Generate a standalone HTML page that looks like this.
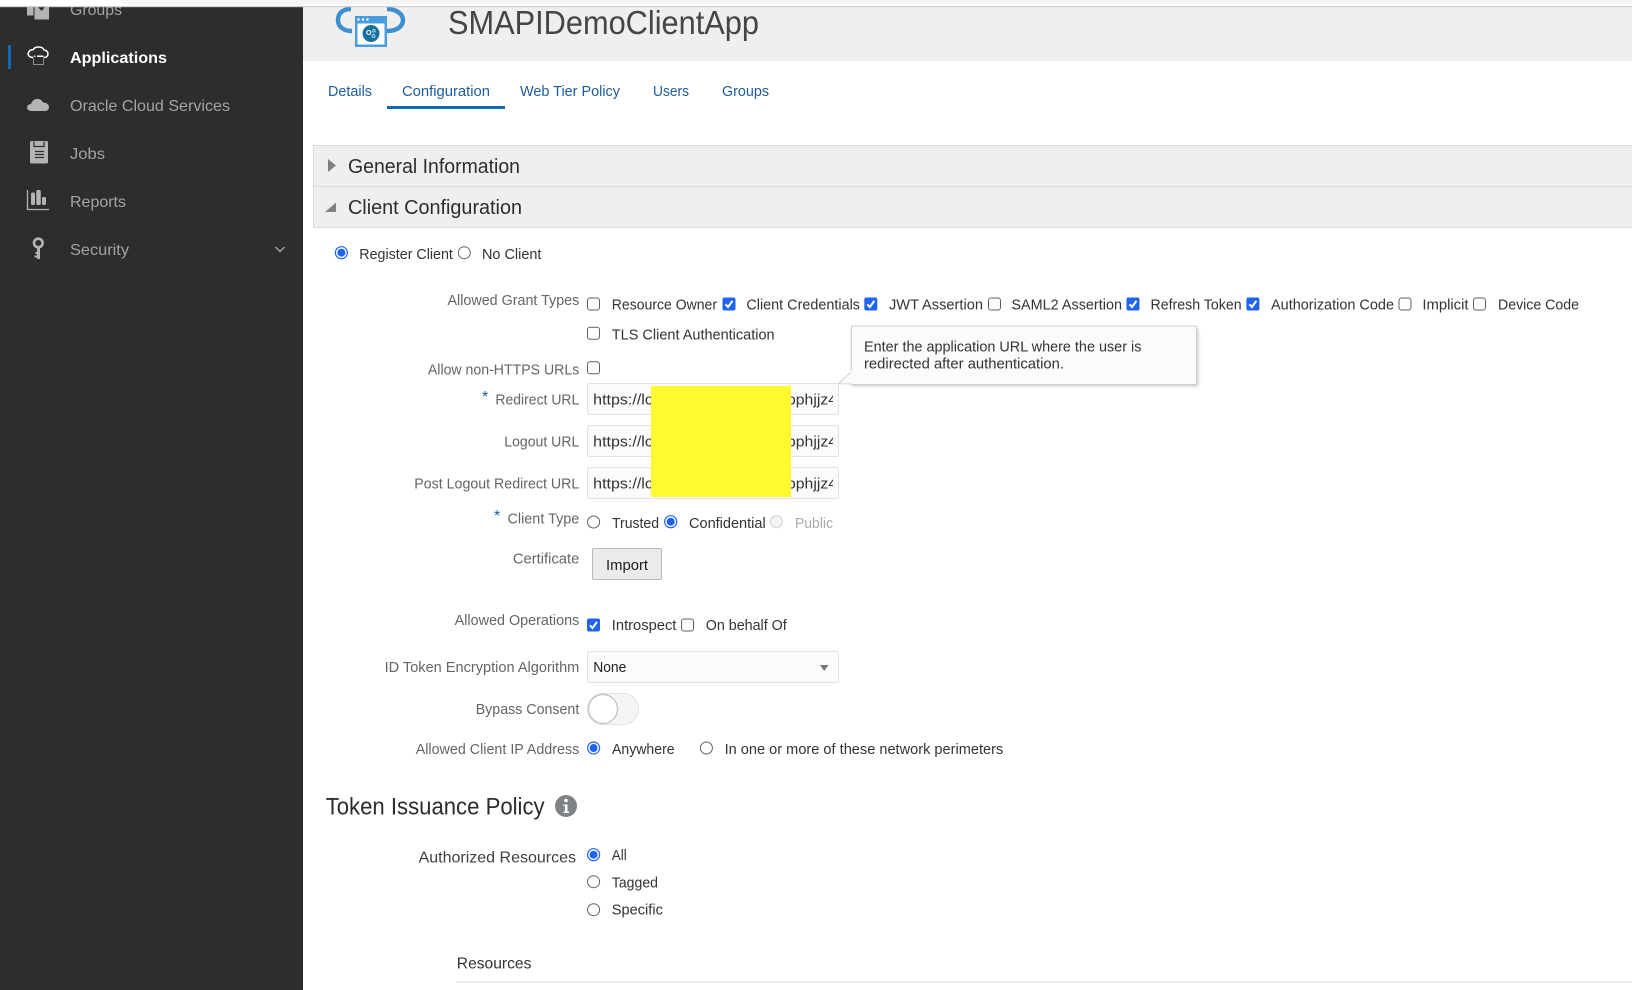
<!DOCTYPE html>
<html lang="en">
<head>
<meta charset="utf-8">
<title>SMAPIDemoClientApp</title>
<style>
html,body{margin:0;padding:0;background:#fff;width:1632px;height:990px;overflow:hidden}
svg{display:block}
text{font-family:"Liberation Sans",Arial,sans-serif;font-size:14.5px;fill:#3c3c3c}
.nav{font-size:16px;fill:#a2a3a5}
.lbl{fill:#656565}
.tab{fill:#1d5c9c}
.sec{font-size:20px;fill:#2d2d2d}
.val{fill:#333}
</style>
</head>
<body>
<svg xmlns="http://www.w3.org/2000/svg" width="1632" height="990" viewBox="0 0 1632 990">
<defs>
  <g id="cb"><rect x="0.5" y="0.5" width="12" height="12" rx="2.5" fill="#fff" stroke="#5f5f5f"/></g>
  <g id="cc"><rect x="0" y="0" width="13" height="13" rx="2" fill="#1f63ee"/><path d="M3 6.8L5.5 9.5L10 3.4" fill="none" stroke="#fff" stroke-width="2"/></g>
  <g id="ru"><circle r="6" fill="#fff" stroke="#5f5f5f"/></g>
  <g id="rs"><circle r="6" fill="#fff" stroke="#1f63ee" stroke-width="1.2"/><circle r="4" fill="#1f63ee"/></g>
  <clipPath id="c1"><rect x="590" y="384" width="243" height="116"/></clipPath>
</defs>

<rect width="1632" height="990" fill="#fff"/>

<!-- sidebar -->
<rect x="0" y="0" width="303" height="990" fill="#2c2d2f"/>
<rect x="8" y="45" width="3" height="24" fill="#0f6ab4"/>
<text class="nav" x="70" y="15" textLength="52" lengthAdjust="spacingAndGlyphs">Groups</text>
<text class="nav" x="70" y="63" textLength="97" lengthAdjust="spacingAndGlyphs" style="font-weight:bold;fill:#fff">Applications</text>
<text class="nav" x="70" y="111" textLength="160" lengthAdjust="spacingAndGlyphs">Oracle Cloud Services</text>
<text class="nav" x="70" y="159" textLength="35" lengthAdjust="spacingAndGlyphs">Jobs</text>
<text class="nav" x="70" y="207" textLength="56" lengthAdjust="spacingAndGlyphs">Reports</text>
<text class="nav" x="70" y="255" textLength="59" lengthAdjust="spacingAndGlyphs">Security</text>
<path d="M275.5 247L280 251.5L284.5 247" fill="none" stroke="#a8a9ab" stroke-width="1.3"/>

<!-- sidebar icons -->
<path d="M27 7H33.5V15.5H27ZM34.5 7H38L41.500 11L45 7H49V19.500H34.5Z" fill="#b3b4b6"/>
<path d="M33.5 57.500C29 57.500 27 54.500 28.800 52C29.500 50.500 31 49.800 33 49.800C35 46 42.500 46 44 50C48 50.300 49.500 55 46 57.200L43.500 57.500" fill="none" stroke="#fff" stroke-width="1.5"/>
<rect x="33.500" y="55.500" width="10" height="9" fill="none" stroke="#8e8f91" stroke-width="1"/>
<rect x="33" y="55" width="11" height="2.500" fill="#2c2d2f"/>
<rect x="37" y="55.500" width="6.500" height="1.500" fill="#fff"/>
<rect x="33.500" y="55.500" width="2.500" height="1.500" fill="#aaa"/>
<path d="M31.500 111C26 111 25.500 104.500 31 104C32.500 98.500 40 96.500 43 102.500C46.500 102.500 49 104.500 49 107C49 109.800 47 111 45 111Z" fill="#b3b4b6"/>
<rect x="30" y="141" width="18" height="22.500" rx="1.500" fill="#b3b4b6"/>
<path d="M34 141.500V146.500H44V141.500" fill="none" stroke="#2c2d2f" stroke-width="1.200"/>
<path d="M35 151.500H44M35 154.500H44M35 157.500H44" stroke="#2c2d2f" stroke-width="1.300"/>
<path d="M27.500 190V209.500H49" fill="none" stroke="#b3b4b6" stroke-width="1.300"/>
<rect x="31" y="192.500" width="4" height="12.500" rx="1.500" fill="#b3b4b6"/>
<rect x="36.300" y="190" width="4.500" height="15" rx="1.500" fill="#b3b4b6"/>
<rect x="42" y="197" width="4" height="8" rx="1.500" fill="#b3b4b6"/>
<circle cx="38.300" cy="243" r="4.300" fill="none" stroke="#b3b4b6" stroke-width="2.600"/>
<path d="M37 247H40V259H37V257.500H34.500V255.500H37V254H35.500V252H37Z" fill="#b3b4b6"/>

<!-- header -->
<rect x="303" y="7" width="1329" height="54" fill="#efefef"/>
<path d="M351 9C342 9 338 14 338 20C338 27 344 31 352 31" fill="none" stroke="#3e8fd2" stroke-width="4.500"/>
<path d="M387 9C396 9 403 14 403 20C403 27 396 31 387 31" fill="none" stroke="#3e8fd2" stroke-width="4.500"/>
<rect x="355" y="16" width="32" height="31" fill="#4a9cdc"/>
<rect x="357.500" y="23.500" width="27" height="21" fill="#fff"/>
<circle cx="358.500" cy="19.500" r="1.200" fill="#fff"/><circle cx="363" cy="19.500" r="1.200" fill="#fff"/><circle cx="367.500" cy="19.500" r="1.200" fill="#fff"/>
<circle cx="371" cy="33.500" r="8.500" fill="#15719f"/>
<circle cx="368.800" cy="32.500" r="2" fill="none" stroke="#fff" stroke-width="1.100"/>
<circle cx="374" cy="30.800" r="1.300" fill="none" stroke="#d5e6f0" stroke-width=".8"/>
<circle cx="373.500" cy="36" r="1.500" fill="none" stroke="#d5e6f0" stroke-width=".8"/>
<text x="448" y="34" textLength="311" lengthAdjust="spacingAndGlyphs" style="font-size:33px;fill:#454545">SMAPIDemoClientApp</text>

<!-- top strip -->
<rect x="0" y="0" width="1632" height="6" fill="#fff"/>
<path d="M118 0H1632V5H128Z" fill="#f5f5f5"/>
<rect x="0" y="6" width="1632" height="1.200" fill="#d0d0d0"/>

<!-- tabs -->
<text class="tab" x="328" y="96" textLength="44" lengthAdjust="spacingAndGlyphs">Details</text>
<text class="tab" x="402" y="96" textLength="88" lengthAdjust="spacingAndGlyphs">Configuration</text>
<text class="tab" x="520" y="96" textLength="100" lengthAdjust="spacingAndGlyphs">Web Tier Policy</text>
<text class="tab" x="653" y="96" textLength="36" lengthAdjust="spacingAndGlyphs">Users</text>
<text class="tab" x="722" y="96" textLength="47" lengthAdjust="spacingAndGlyphs">Groups</text>
<rect x="387" y="106" width="118" height="3" fill="#0f6ab4"/>

<!-- sections -->
<rect x="313.500" y="145.500" width="1320" height="41" fill="#efefef" stroke="#dcdcdc"/>
<rect x="313.500" y="186.500" width="1320" height="41" fill="#efefef" stroke="#dcdcdc"/>
<path d="M328 159L336 165.500L328 172Z" fill="#808080"/>
<path d="M336 202.500V212H325Z" fill="#808080"/>
<text class="sec" x="348" y="173" textLength="172" lengthAdjust="spacingAndGlyphs">General Information</text>
<text class="sec" x="348" y="214" textLength="174" lengthAdjust="spacingAndGlyphs">Client Configuration</text>

<!-- client radio -->
<use href="#rs" x="341.400" y="252.700"/>
<text class="val" x="359.300" y="259" textLength="93.600" lengthAdjust="spacingAndGlyphs">Register Client</text>
<use href="#ru" x="464.300" y="252.700"/>
<text class="val" x="482" y="259" textLength="59.400" lengthAdjust="spacingAndGlyphs">No Client</text>

<!-- grant types -->
<text class="lbl" x="447.500" y="305" textLength="131.800" lengthAdjust="spacingAndGlyphs">Allowed Grant Types</text>
<use href="#cb" x="587" y="297.500"/>
<text class="val" x="611.800" y="309.300" textLength="105.200" lengthAdjust="spacingAndGlyphs">Resource Owner</text>
<use href="#cc" x="722.500" y="297.500"/>
<text class="val" x="746.400" y="309.300" textLength="113.600" lengthAdjust="spacingAndGlyphs">Client Credentials</text>
<use href="#cc" x="864.300" y="297.500"/>
<text class="val" x="889" y="309.300" textLength="94" lengthAdjust="spacingAndGlyphs">JWT Assertion</text>
<use href="#cb" x="988" y="297.500"/>
<text class="val" x="1011.400" y="309.300" textLength="110.600" lengthAdjust="spacingAndGlyphs">SAML2 Assertion</text>
<use href="#cc" x="1126.500" y="297.500"/>
<text class="val" x="1150.500" y="309.300" textLength="91.100" lengthAdjust="spacingAndGlyphs">Refresh Token</text>
<use href="#cc" x="1246.400" y="297.500"/>
<text class="val" x="1271" y="309.300" textLength="123" lengthAdjust="spacingAndGlyphs">Authorization Code</text>
<use href="#cb" x="1398.500" y="297.500"/>
<text class="val" x="1422.400" y="309.300" textLength="46.100" lengthAdjust="spacingAndGlyphs">Implicit</text>
<use href="#cb" x="1473" y="297.500"/>
<text class="val" x="1498" y="309.300" textLength="81" lengthAdjust="spacingAndGlyphs">Device Code</text>
<use href="#cb" x="587" y="326.700"/>
<text class="val" x="611.800" y="339.300" textLength="162.800" lengthAdjust="spacingAndGlyphs">TLS Client Authentication</text>

<text class="lbl" x="427.900" y="374.300" textLength="151.400" lengthAdjust="spacingAndGlyphs">Allow non-HTTPS URLs</text>
<use href="#cb" x="587" y="361.300"/>

<!-- urls -->
<text x="482" y="402" style="font-size:16px;fill:#1d5c9c">*</text>
<text class="lbl" x="495.400" y="404.300" textLength="83.900" lengthAdjust="spacingAndGlyphs">Redirect URL</text>
<text class="lbl" x="504.300" y="446.300" textLength="75" lengthAdjust="spacingAndGlyphs">Logout URL</text>
<text class="lbl" x="414.300" y="488.300" textLength="165" lengthAdjust="spacingAndGlyphs">Post Logout Redirect URL</text>
<rect x="587.500" y="383.500" width="251" height="31" rx="2" fill="#fbfbfe" stroke="#e0e1e4"/>
<rect x="587.500" y="425.500" width="251" height="31" rx="2" fill="#fbfbfe" stroke="#e0e1e4"/>
<rect x="587.500" y="467.500" width="251" height="31" rx="2" fill="#fbfbfe" stroke="#e0e1e4"/>
<g clip-path="url(#c1)">
<text class="val" x="593.200" y="404.300" textLength="73" lengthAdjust="spacingAndGlyphs">https://lcm</text>
<text class="val" x="593.200" y="446.300" textLength="73" lengthAdjust="spacingAndGlyphs">https://lcm</text>
<text class="val" x="593.200" y="488.300" textLength="73" lengthAdjust="spacingAndGlyphs">https://lcm</text>
<text class="val" x="787" y="404.300" textLength="50" lengthAdjust="spacingAndGlyphs">pphjjz4</text>
<text class="val" x="787" y="446.300" textLength="50" lengthAdjust="spacingAndGlyphs">pphjjz4</text>
<text class="val" x="787" y="488.300" textLength="50" lengthAdjust="spacingAndGlyphs">pphjjz4</text>
</g>
<rect x="651" y="386" width="140" height="111" fill="#fdfa2f"/>

<!-- tooltip -->
<rect x="852" y="328" width="346" height="58" fill="#999" opacity=".6" style="filter:blur(1.5px)"/>
<path d="M851.500 326H1196.500V384.500H851.500Z" fill="#fbfbfe" stroke="#cfcfcf"/>
<path d="M851.500 371.500L838.600 383.700L851.500 384" fill="#fbfbfe" stroke="#cfcfcf"/>
<rect x="850.500" y="371" width="2" height="13" fill="#fbfbfe"/>
<text class="val" x="864" y="351.700" textLength="277.400" lengthAdjust="spacingAndGlyphs">Enter the application URL where the user is</text>
<text class="val" x="864" y="368.700" textLength="200" lengthAdjust="spacingAndGlyphs">redirected after authentication.</text>

<!-- client type -->
<text x="494" y="521" style="font-size:16px;fill:#1d5c9c">*</text>
<text class="lbl" x="507.500" y="523.300" textLength="71.800" lengthAdjust="spacingAndGlyphs">Client Type</text>
<use href="#ru" x="593.600" y="522"/>
<text class="val" x="612" y="528" textLength="47" lengthAdjust="spacingAndGlyphs">Trusted</text>
<use href="#rs" x="670.700" y="521.700"/>
<text class="val" x="689" y="528" textLength="76.700" lengthAdjust="spacingAndGlyphs">Confidential</text>
<circle cx="776.400" cy="521.700" r="6" fill="#f3f3f3" stroke="#cfcfcf"/>
<text x="795" y="528" textLength="38" lengthAdjust="spacingAndGlyphs" style="fill:#ababab">Public</text>

<!-- cert -->
<text class="lbl" x="512.900" y="563.700" textLength="66.400" lengthAdjust="spacingAndGlyphs">Certificate</text>
<rect x="592.500" y="548.500" width="69" height="31" rx="1.500" fill="#ebebeb" stroke="#b9b9b9"/>
<text x="606" y="570" textLength="42" lengthAdjust="spacingAndGlyphs" style="fill:#1e1e1e">Import</text>

<!-- operations -->
<text class="lbl" x="454.600" y="625" textLength="124.700" lengthAdjust="spacingAndGlyphs">Allowed Operations</text>
<use href="#cc" x="587" y="618.500"/>
<text class="val" x="611.800" y="630" textLength="64.600" lengthAdjust="spacingAndGlyphs">Introspect</text>
<use href="#cb" x="681" y="618.500"/>
<text class="val" x="705.700" y="630" textLength="81.100" lengthAdjust="spacingAndGlyphs">On behalf Of</text>

<!-- select -->
<text class="lbl" x="384.600" y="672" textLength="194.700" lengthAdjust="spacingAndGlyphs">ID Token Encryption Algorithm</text>
<rect x="587.500" y="651.500" width="251" height="31" rx="2" fill="#fbfbfe" stroke="#e0e1e4"/>
<text class="val" x="593.200" y="672" textLength="33.200" lengthAdjust="spacingAndGlyphs" style="fill:#222">None</text>
<path d="M820 665H828.500L824.200 671Z" fill="#777"/>

<!-- toggle -->
<text class="lbl" x="475.700" y="714" textLength="103.600" lengthAdjust="spacingAndGlyphs">Bypass Consent</text>
<rect x="587.500" y="693.500" width="51" height="31" rx="15.500" fill="#f5f5f5" stroke="#e2e2e2"/>
<circle cx="603" cy="709" r="14.500" fill="#fff" stroke="#bdbdbd" stroke-width="1.200"/>

<!-- ip -->
<text class="lbl" x="415.700" y="754" textLength="163.600" lengthAdjust="spacingAndGlyphs">Allowed Client IP Address</text>
<use href="#rs" x="593.600" y="748"/>
<text class="val" x="612" y="754" textLength="62.600" lengthAdjust="spacingAndGlyphs">Anywhere</text>
<use href="#ru" x="706.400" y="748"/>
<text class="val" x="724.600" y="754" textLength="278.700" lengthAdjust="spacingAndGlyphs">In one or more of these network perimeters</text>

<!-- token -->
<text x="325.700" y="814.700" textLength="218.900" lengthAdjust="spacingAndGlyphs" style="font-size:24px;fill:#2d2d2d">Token Issuance Policy</text>
<circle cx="566" cy="806" r="11" fill="#7f8386"/>
<circle cx="566" cy="800.500" r="1.800" fill="#fff"/>
<path d="M563.500 804.500H567.500V811.500H569V813H563.500V811.500H565V806H563.500Z" fill="#fff"/>

<text x="418.600" y="862.700" textLength="157.400" lengthAdjust="spacingAndGlyphs" style="font-size:16px;fill:#3f3f3f">Authorized Resources</text>
<use href="#rs" x="593.600" y="854.700"/>
<text class="val" x="611.800" y="860" textLength="15" lengthAdjust="spacingAndGlyphs">All</text>
<use href="#ru" x="593.600" y="881.700"/>
<text class="val" x="611.800" y="887.700" textLength="46.200" lengthAdjust="spacingAndGlyphs">Tagged</text>
<use href="#ru" x="593.600" y="909.700"/>
<text class="val" x="611.800" y="914.700" textLength="51.100" lengthAdjust="spacingAndGlyphs">Specific</text>

<text x="456.800" y="968.700" textLength="74.600" lengthAdjust="spacingAndGlyphs" style="font-size:16px;fill:#333">Resources</text>
<rect x="456" y="981.500" width="1176" height="1" fill="#dcdcdc"/>
</svg>
</body>
</html>
